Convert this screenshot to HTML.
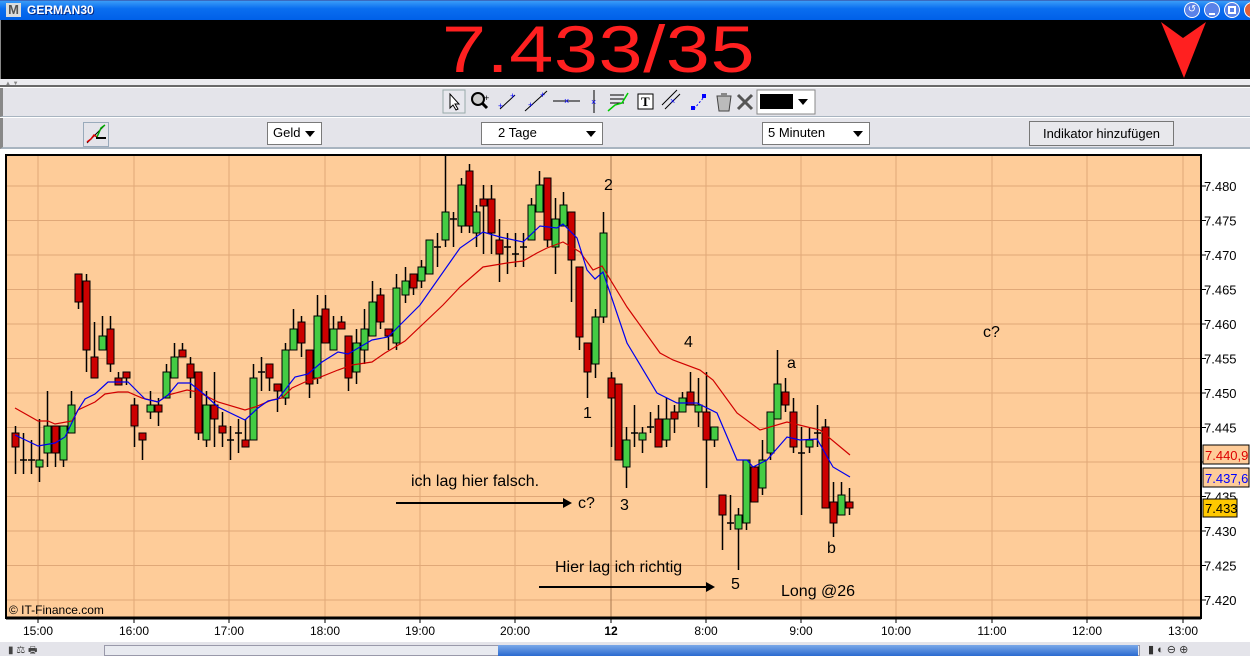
<!DOCTYPE html>
<html><head><meta charset="utf-8"><style>
*{margin:0;padding:0;box-sizing:border-box}
body{width:1250px;height:656px;overflow:hidden;background:#fff;font-family:"Liberation Sans",sans-serif;position:relative}
.a{position:absolute}
#title{left:0;top:0;width:1250px;height:20px;background:linear-gradient(#3a9cf8,#0a6ef0 40%,#0060e8);border-top:1px solid #3a6ac0}
#black{left:0;top:20px;width:1250px;height:59px;background:#000;border-left:1px solid #888}
.tb{background:#e4e4ea}
.dd{background:#fff;border:1px solid #7a7a7a;font-size:13px;padding-left:5px;line-height:20px;height:23px}
.dd:after{content:"";position:absolute;right:6px;top:8px;border-left:5px solid transparent;border-right:5px solid transparent;border-top:6px solid #000}
</style></head><body>
<div id="title" class="a">
 <div class="a" style="left:6px;top:2px;width:15px;height:14px;background:#dcdcdc;color:#555;font:bold 13px 'Liberation Sans';line-height:14px;text-align:center">M</div>
 <div class="a" style="left:27px;top:2px;color:#fff;font:bold 12px 'Liberation Sans';text-shadow:1px 1px #0a2a80">GERMAN30</div>
 <div class="a" style="left:1184px;top:1px;width:16px;height:16px;border-radius:50%;background:#5a82e8;border:1px solid #fff;color:#fff;font-size:10px;text-align:center;line-height:14px">↺</div>
 <div class="a" style="left:1204px;top:1px;width:16px;height:16px;border-radius:50%;background:#5a82e8;border:1px solid #fff"><div class="a" style="left:4px;top:10px;width:6px;height:2px;background:#fff"></div></div>
 <div class="a" style="left:1224px;top:1px;width:16px;height:16px;border-radius:50%;background:#5a82e8;border:1px solid #fff"><div class="a" style="left:3px;top:3px;width:8px;height:8px;border:2px solid #fff"></div></div>
 <div class="a" style="left:1244px;top:1px;width:16px;height:16px;border-radius:50%;background:#e0603a;border:1px solid #fff"></div>
</div>
<div id="black" class="a">
 <div class="a" style="left:441px;top:-9px;color:#ff2020;font:66px 'Liberation Sans';transform:scaleX(1.2);transform-origin:0 0;letter-spacing:0.5px">7.433/35</div>
 <svg class="a" style="left:1160px;top:2px" width="50" height="56"><polygon points="0,0 22,16 45,0 23,56" fill="#ff2020"/></svg>
</div>
<div class="a" style="left:0;top:79px;width:1250px;height:8px;background:#ececf0;border-bottom:2px solid #6a6a6a"></div>
<div class="a" style="left:5px;top:81px;font-size:6px;color:#888">▲ ▼</div>
<div class="a tb" style="left:0;top:88px;width:1250px;height:29px;border-bottom:1px solid #a8b4c0;border-left:3px solid #888"></div>
<svg class="a" style="left:440px;top:89px" width="380" height="26">
 <rect x="3" y="1" width="22" height="23" fill="#e8e8ee" stroke="#9aa"/>
 <path d="M10 5 L10 19 L13 16 L16 21 L18 20 L15 15 L19 15 Z" fill="#fff" stroke="#000"/>
 <circle cx="38" cy="10" r="6" fill="#ccc" stroke="#000" stroke-width="2"/><path d="M42 14 L47 19" stroke="#000" stroke-width="3"/><text x="44" y="12" font-size="9">+</text>
 <path d="M60 20 L75 6" stroke="#000"/><text x="58" y="20" fill="#00f" font-size="9">+</text><text x="70" y="10" fill="#00f" font-size="9">+</text>
 <path d="M85 22 L107 2" stroke="#000"/><text x="88" y="19" fill="#00f" font-size="9">+</text><text x="100" y="9" fill="#00f" font-size="9">+</text>
 <path d="M113 12 L140 12" stroke="#000"/><text x="124" y="15" fill="#00f" font-size="9">×</text>
 <path d="M154 1 L154 24" stroke="#000"/><text x="151" y="16" fill="#00f" font-size="9">×</text>
 <path d="M170 6 L184 6 M170 10 L184 10 M170 14 L184 14" stroke="#000"/><path d="M168 22 L175 16 L182 14 L188 4" stroke="#0c0" fill="none" stroke-width="1.5"/>
 <rect x="198" y="5" width="15" height="15" fill="#fff" stroke="#000"/><text x="201" y="17" font-size="13" font-weight="bold" font-family="Liberation Serif">T</text>
 <path d="M225 20 L240 5 M222 16 L237 1" stroke="#000"/><text x="230" y="15" fill="#00f" font-size="9">×</text>
 <path d="M254 20 L264 8" stroke="#00f" stroke-dasharray="2 2"/><rect x="251" y="17" width="4" height="4" fill="#00f"/><rect x="262" y="5" width="4" height="4" fill="#00f"/>
 <path d="M277 7 L291 7 L289 22 L279 22 Z" fill="#bbb" stroke="#444"/><rect x="281" y="4" width="6" height="3" fill="#888"/>
 <path d="M298 6 L312 20 M312 6 L298 20" stroke="#555" stroke-width="3"/>
 <rect x="317" y="1" width="58" height="24" fill="#fff" stroke="#888"/><rect x="320" y="5" width="33" height="15" fill="#000"/><path d="M358 10 L368 10 L363 16 Z"/>
</svg>
<div class="a tb" style="left:0;top:118px;width:1250px;height:31px;border-bottom:2px solid #a8b4c0;border-left:3px solid #888"></div>
<div class="a" style="left:83px;top:122px;width:26px;height:25px;border:1px solid #9ab;background:#e4e4ea"><svg width="24" height="23"><path d="M3 20 L20 3" stroke="#000"/><path d="M3 19 L7 16 L10 12 L13 14" stroke="#d00" fill="none" stroke-width="1.5"/><path d="M13 14 L17 5 L21 2" stroke="#0a0" fill="none" stroke-width="1.5"/><path d="M12 15 L22 15" stroke="#000" stroke-width="2"/></svg></div>
<div class="a dd" style="left:267px;top:122px;width:55px">Geld</div>
<div class="a dd" style="left:481px;top:122px;width:122px;padding-left:16px">2 Tage</div>
<div class="a dd" style="left:762px;top:122px;width:108px">5 Minuten</div>
<div class="a" style="left:1029px;top:121px;width:145px;height:25px;border:1px solid #777;background:#e8e8ec;font-size:13px;text-align:center;line-height:23px">Indikator hinzufügen</div>

<svg class="a" style="left:0;top:150px" width="1250" height="506" id="ch"></svg>
<div class="a" style="left:0;top:642px;width:1250px;height:14px;background:#e4e4ea"></div>
<div class="a" style="left:104px;top:645px;width:1036px;height:11px;background:#e8eaf0;border:1px solid #99a"></div>
<div class="a" style="left:498px;top:645px;width:640px;height:11px;background:linear-gradient(#7aa8e8,#2a6ad0)"></div>
<div class="a" style="left:8px;top:643px;font-size:10px;color:#444">▮ ⚖ 🖶</div>
<div class="a" style="left:1148px;top:643px;font-size:11px;color:#333">▮ ◐ ⊖ ⊕</div>
<script>
var s='';
s+='<rect x="6" y="5" width="1195" height="463" fill="#fecc99"/>';
for(var k=0;k<13;k++){var y=36+34.5*k;s+='<line x1="7" x2="1200" y1="'+y+'" y2="'+y+'" stroke="#e0a878"/>';}
var xs=[38,134,229,325,420,515,611,706,801,896,992,1087,1183],lb=["15:00","16:00","17:00","18:00","19:00","20:00","12","8:00","9:00","10:00","11:00","12:00","13:00"];
xs.forEach(function(x,i){s+='<line x1="'+x+'" x2="'+x+'" y1="5" y2="467" stroke="'+(i==6?'#a87850':'#e0a878')+'"/>';s+='<line x1="'+x+'" x2="'+x+'" y1="468" y2="473" stroke="#000"/><text x="'+x+'" y="485" font-size="12" text-anchor="middle" font-family="Liberation Sans" '+(i==6?'font-weight="bold"':'')+'>'+lb[i]+'</text>';});
s+='<path d="M6 5 H1201 V468 H6 Z" fill="none" stroke="#000" stroke-width="2"/><line x1="6" x2="1201" y1="468" y2="468" stroke="#000" stroke-width="3"/>';
var C=[[15,426,474,433,447,0],[23,433,474,460,460,2],[31,440,474,460,460,2],[39,419,482,460,467,1],[47,391,467,426,453,1],[55,426,467,426,453,0],[63,426,467,426,460,1],[71,391,433,405,433,1],[78,274,309,274,302,0],[86,274,372,281,350,0],[94,322,378,357,378,0],[102,316,350,336,350,1],[110,316,372,329,364,0],[118,372,385,378,385,0],[126,372,385,372,378,0],[134,398,447,405,426,0],[142,433,460,433,440,0],[150,391,419,405,412,1],[158,398,426,405,412,0],[166,364,398,372,398,1],[174,343,378,357,378,1],[182,343,357,350,357,0],[190,357,398,364,378,0],[198,372,440,372,433,0],[206,391,447,405,440,1],[214,372,447,405,419,0],[222,412,447,426,433,0],[230,426,460,440,440,2],[238,419,453,433,433,2],[245,419,447,440,447,0],[253,364,440,378,440,1],[261,357,391,372,372,2],[269,364,391,364,378,0],[277,384,412,384,391,0],[285,343,405,350,398,1],[293,309,350,329,350,1],[301,316,357,322,343,0],[309,350,398,350,384,0],[317,295,384,316,378,1],[325,295,343,309,343,0],[333,316,350,329,350,1],[341,316,329,322,329,0],[348,336,391,336,378,0],[356,329,384,343,372,1],[364,309,364,329,350,1],[372,281,336,302,336,1],[380,288,329,295,322,0],[388,329,350,329,336,0],[396,274,350,288,343,1],[405,267,303,281,295,1],[413,274,295,274,288,0],[421,260,288,267,281,1],[429,240,274,240,274,1],[437,233,267,247,247,2],[445,155,247,212,240,1],[453,212,247,219,219,2],[461,178,233,185,226,1],[469,164,233,171,226,0],[476,205,247,212,233,1],[483,185,254,199,206,0],[491,185,254,199,233,0],[499,219,282,240,254,0],[507,233,274,247,247,2],[515,233,267,254,254,2],[523,233,267,247,247,2],[531,198,240,205,240,1],[539,171,212,185,212,1],[547,178,247,178,240,0],[555,198,274,219,247,1],[563,192,226,205,226,1],[571,212,302,212,260,0],[579,267,350,267,337,0],[587,343,398,343,372,0],[595,309,378,317,364,1],[603,212,323,233,317,1],[611,372,447,378,398,0],[618,384,460,384,460,0],[626,427,488,440,467,1],[634,405,447,433,433,2],[642,427,453,433,440,1],[650,412,433,427,427,2],[658,405,447,419,447,0],[666,398,447,419,440,1],[674,405,433,412,419,0],[682,392,412,398,412,1],[690,372,405,392,405,0],[698,378,427,405,412,1],[706,372,488,412,440,0],[714,427,447,427,440,1],[722,495,550,495,515,0],[730,495,530,523,523,2],[738,508,570,515,529,1],[746,460,530,460,523,1],[754,467,502,467,502,0],[762,440,495,460,488,1],[770,412,460,412,453,1],[777,350,419,384,419,1],[785,378,412,392,405,0],[793,398,453,412,447,0],[801,427,515,453,453,2],[809,427,453,440,447,1],[817,405,447,433,433,2],[825,419,508,427,508,0],[833,482,537,502,523,0],[841,482,515,495,515,1],[849,488,515,502,508,0]];
var blue=[[15,435],[38,446],[55,443],[65,437],[78,410],[85,399],[95,394],[108,382],[128,382],[138,392],[145,399],[158,402],[168,395],[178,383],[190,383],[205,395],[218,407],[245,420],[258,408],[268,401],[278,399],[295,377],[308,374],[322,362],[338,352],[348,354],[372,340],[388,337],[405,320],[420,305],[460,248],[483,232],[500,237],[523,242],[540,226],[557,228],[563,224],[577,238],[587,270],[595,279],[603,272],[627,343],[657,393],[677,403],[697,403],[717,413],[737,460],[747,460],[753,467],[767,460],[787,437],[800,440],[817,439],[833,467],[850,477]];
var red=[[15,408],[38,421],[48,421],[55,424],[72,421],[78,410],[95,402],[105,394],[118,392],[128,392],[142,398],[158,402],[168,395],[187,390],[198,392],[218,402],[245,410],[255,407],[272,400],[282,398],[292,388],[305,382],[318,378],[338,370],[352,365],[372,362],[385,353],[405,341],[443,305],[460,287],[483,267],[507,263],[523,261],[537,253],[547,248],[563,242],[580,252],[593,270],[602,266],[627,307],[660,353],[673,360],[700,370],[713,380],[737,413],[760,430],[787,422],[820,430],[850,455]];
function pl(a,c){return '<polyline fill="none" stroke="'+c+'" stroke-width="1.2" points="'+a.map(function(p){return p[0]+','+(p[1]-150)}).join(' ')+'"/>';}
C.forEach(function(c){var x=c[0],o=-150;s+='<line x1="'+(x+.5)+'" x2="'+(x+.5)+'" y1="'+(c[1]+o)+'" y2="'+(c[2]+o)+'" stroke="#000" stroke-width="1.5"/>';
 if(c[5]==2)s+='<line x1="'+(x-3)+'" x2="'+(x+4)+'" y1="'+(c[3]+o)+'" y2="'+(c[3]+o)+'" stroke="#000" stroke-width="1.5"/>';
 else s+='<rect x="'+(x-3)+'" y="'+(c[3]+o)+'" width="7" height="'+Math.max(3,c[4]-c[3])+'" fill="'+(c[5]?'#44cc44':'#cc0000')+'" stroke="#000" stroke-width="1"/>';});
s+=pl(red,'#d00000')+pl(blue,'#0000ee');
var T=[[411,336,"ich lag hier falsch.",16],[578,358,"c?",16],[555,422,"Hier lag ich richtig",16],[781,446,"Long @26",16],[604,40,"2",16],[583,268,"1",16],[620,360,"3",16],[684,197,"4",16],[731,439,"5",16],[787,218,"a",16],[827,403,"b",16],[983,187,"c?",16],[9,464,"© IT-Finance.com",12]];
T.forEach(function(t){s+='<text x="'+t[0]+'" y="'+t[1]+'" font-size="'+t[3]+'" font-family="Liberation Sans">'+t[2]+'</text>';});
s+='<line x1="396" x2="565" y1="353" y2="353" stroke="#000" stroke-width="2"/><polygon points="563,348 572,353 563,358"/>';
s+='<line x1="539" x2="708" y1="437" y2="437" stroke="#000" stroke-width="2"/><polygon points="706,432 715,437 706,442"/>';
var pr=["7.480","7.475","7.470","7.465","7.460","7.455","7.450","7.445",null,"7.435","7.430","7.425","7.420"];
pr.forEach(function(p,k){var y=36+34.5*k;s+='<line x1="1201" x2="1206" y1="'+y+'" y2="'+y+'" stroke="#000"/>';if(p)s+='<text x="1204" y="'+(y+5)+'" font-size="13" font-family="Liberation Sans">'+p+'</text>';});
s+='<rect x="1203" y="295" width="46" height="19" fill="#fecc99" stroke="#000"/><text x="1205" y="310" font-size="13" fill="#d00">7.440,9</text>';
s+='<rect x="1203" y="318" width="46" height="19" fill="#fecc99" stroke="#000"/><text x="1205" y="333" font-size="13" fill="#00f">7.437,6</text>';
s+='<rect x="1203" y="349" width="34" height="18" fill="#ffc800" stroke="#000"/><text x="1205" y="363" font-size="13">7.433</text>';
document.getElementById('ch').innerHTML=s;
</script>
</body></html>
